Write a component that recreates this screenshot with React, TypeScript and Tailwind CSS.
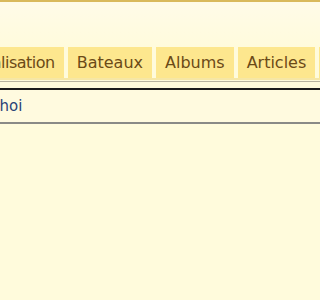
export default function App() {
  const tabs = ["Localisation", "Bateaux", "Albums", "Articles", "Forum"];

  return (
    <div className="w-[320px] h-[300px] overflow-hidden bg-[#fffbdc] border-t-2 border-[#d9b95c] font-['DejaVu_Sans',Verdana,sans-serif]">
      <div className="h-[45px] bg-gradient-to-b from-[#fffbe8] to-[#fffbdc]" />

      <div className="flex gap-[4px] ml-[-43px] border-b-2 border-[#f6e7a6]">
        {tabs.map((tab, i) => (
          <div
            key={tab}
            className={
              i === 0
                ? "shrink-0 h-[31px] px-[9px] flex items-center bg-[#fde78e] text-[16px] text-[#6b4a17] tracking-[-0.5px]"
                : "shrink-0 h-[31px] px-[9px] flex items-center bg-[#fde78e] text-[16px] text-[#6b4a17]"
            }
          >
            {tab}
          </div>
        ))}
      </div>

      <div className="mt-[1px] border-t border-[#b8b4a0]" />

      <div className="mt-[6px] border-t-2 border-[#1c1c1c] border-b-2 border-b-[#8a8a86] bg-[#fffadf] h-[36px] flex items-center">
        <span className="ml-[-11px] text-[15px] text-[#2b4277]">Choi</span>
      </div>
    </div>
  );
}
